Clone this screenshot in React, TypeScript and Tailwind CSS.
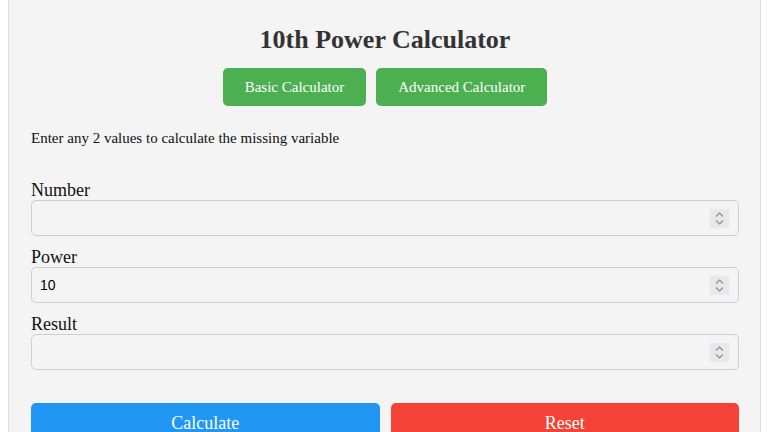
import React, { useState } from 'react';

const serif = { fontFamily: '"Liberation Serif", "Times New Roman", serif' };

// Native-looking spinner box drawn over the right side of an input
const Spinner: React.FC = () => (
  <div className="absolute right-[10px] top-[9px] w-[19px] h-[19px] bg-[#e9e9ed] flex flex-col items-center justify-center gap-[3px] pointer-events-none">
    <svg width="9" height="5" viewBox="0 0 9 5" fill="none">
      <path d="M1 4.5 L4.5 1 L8 4.5" stroke="#8a8a8f" strokeWidth="1.1" />
    </svg>
    <svg width="9" height="5" viewBox="0 0 9 5" fill="none">
      <path d="M1 0.5 L4.5 4 L8 0.5" stroke="#8a8a8f" strokeWidth="1.1" />
    </svg>
  </div>
);

const Field: React.FC<{ label: string; value: string; onChange: (v: string) => void }> = ({ label, value, onChange }) => (
  <div>
    <label className="block text-[18px] leading-[20px] text-[#111]" style={serif}>{label}</label>
    <div className="relative">
      <input
        type="text"
        value={value}
        onChange={e => onChange(e.target.value)}
        className="block w-full h-[36px] pl-2 pr-10 border border-[#cfcfcf] rounded-[5px] bg-[#f4f4f4] text-[14px] text-black outline-none"
        style={{ fontFamily: '"Liberation Sans", Arial, sans-serif' }}
      />
      <Spinner />
    </div>
  </div>
);

export default function App() {
  const [number, setNumber] = useState('');
  const [power, setPower] = useState('10');
  const [result, setResult] = useState('');

  const calculate = () => {
    const n = parseFloat(number);
    const p = parseFloat(power);
    const r = parseFloat(result);
    if (!isNaN(n) && !isNaN(p)) setResult(String(Math.pow(n, p)));
    else if (!isNaN(r) && !isNaN(p)) setNumber(String(Math.pow(r, 1 / p)));
    else if (!isNaN(n) && !isNaN(r)) setPower(String(Math.log(r) / Math.log(n)));
  };

  const reset = () => {
    setNumber('');
    setPower('10');
    setResult('');
  };

  return (
    <div className="min-h-screen bg-white pl-2 pr-[7px]" style={serif}>
      <div className="bg-[#f4f4f4] border-x border-[#dddddd] pl-[22px] pr-[21px] pt-[25px] pb-8 min-h-[432px]">
        <h2 className="text-center text-[26px] leading-[30px] font-bold text-[#333]">10th Power Calculator</h2>

        <div className="flex justify-center gap-[10px] mt-[13px]">
          <button className="bg-[#4caf50] text-white text-[15px] leading-[18px] py-[10px] px-[22px] rounded-[5px]">
            Basic Calculator
          </button>
          <button className="bg-[#4caf50] text-white text-[15px] leading-[18px] py-[10px] px-[22px] rounded-[5px]">
            Advanced Calculator
          </button>
        </div>

        <p className="mt-[23px] text-[15px] leading-[18px] text-[#111]">
          Enter any 2 values to calculate the missing variable
        </p>

        <div className="mt-[33px] flex flex-col gap-[11px]">
          <Field label="Number" value={number} onChange={setNumber} />
          <Field label="Power" value={power} onChange={setPower} />
          <Field label="Result" value={result} onChange={setResult} />
        </div>

        <div className="grid grid-cols-2 gap-[11px] mt-[33px]">
          <button onClick={calculate} className="bg-[#2196f3] text-white text-[18px] leading-[20px] py-[10px] rounded-[5px]">
            Calculate
          </button>
          <button onClick={reset} className="bg-[#f44336] text-white text-[18px] leading-[20px] py-[10px] rounded-[5px]">
            Reset
          </button>
        </div>
      </div>
    </div>
  );
}
